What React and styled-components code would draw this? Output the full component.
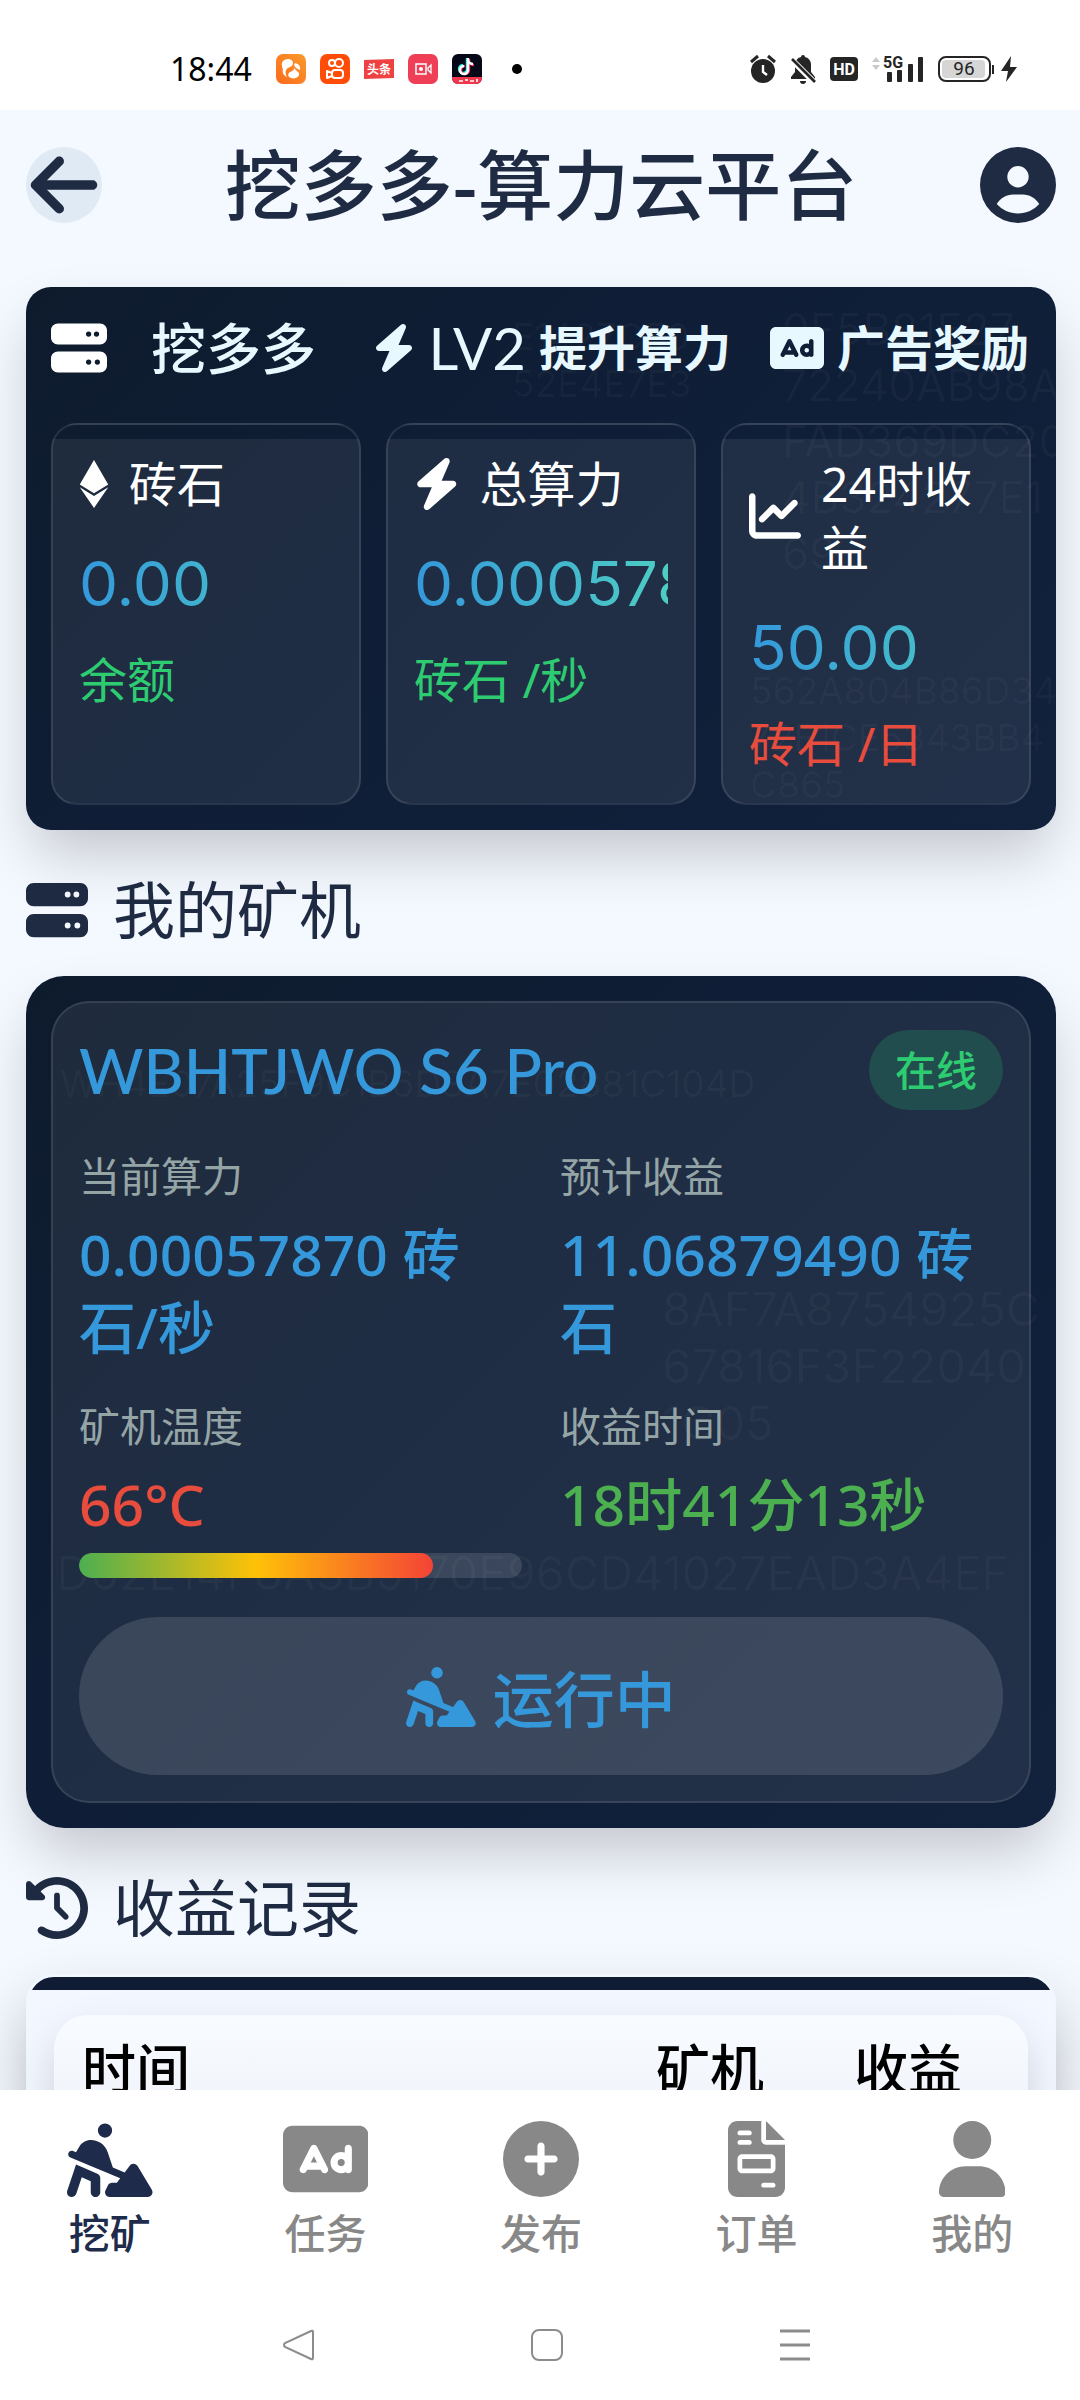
import {
  FaArrowLeft,
  FaBolt,
  FaChartLine,
  FaCirclePlus,
  FaCircleUser,
  FaClockRotateLeft,
  FaEthereum,
  FaFileInvoice,
  FaPersonDigging,
  FaRectangleAd,
  FaServer,
  FaUser,
} from "react-icons/fa6";
import styled, { createGlobalStyle } from "styled-components";

const GlobalStyle = createGlobalStyle`
  * {
    box-sizing: border-box;
  }

  body {
    margin: 0;
    background-color: #f4f8ff;
    font-family: "Noto Sans", "Noto Sans CJK SC", sans-serif;
    color: #1e2b43;
  }

  h1, h2, h3, p, dl, dd {
    margin: 0;
  }

  button {
    border: none;
    padding: 0;
    background: none;
    color: inherit;
    font: inherit;
    cursor: pointer;
  }

  svg {
    display: block;
    flex-shrink: 0;
  }
`;

const Phone = styled.div`
  height: 100vh;
  display: flex;
  flex-direction: column;
`;

// react-icons draws every icon in a square, $ratio gives it its own width back
const Glyph = styled.span`
  flex-shrink: 0;
  font-size: ${({ $size }) => $size}px;
  line-height: 1;

  svg {
    width: ${({ $ratio = 1 }) => $ratio}em;
    height: 1em;
  }
`;

const StatusBar = styled.div`
  height: 110px;
  flex-shrink: 0;
  display: flex;
  justify-content: space-between;
  align-items: center;
  padding: 28px 62px 0 170px;
  background-color: white;
`;

const StatusGroup = styled.div`
  display: flex;
  align-items: center;
  gap: 14px;
`;

const Clock = styled.span`
  margin-right: 10px;
  font-size: 32px;
  line-height: 30px;
  color: black;
`;

const Main = styled.main`
  flex: 1;
  min-height: 0;
  overflow: hidden;
  padding: 0 24px 0 26px;
`;

const Header = styled.header`
  display: flex;
  justify-content: space-between;
  align-items: center;
  padding: 37px 0 64px;
`;

const PageTitle = styled.h1`
  font-size: 76px;
  font-weight: 500;
  line-height: 76px;
`;

const BackButton = styled.button`
  width: 76px;
  height: 76px;
  display: flex;
  justify-content: center;
  align-items: center;
  border-radius: 50%;
  background-color: #e0eaf5;
`;

const Panel = styled.section`
  position: relative;
  padding: 25px;
  border-radius: ${({ $radius }) => $radius}px;
  background: linear-gradient(135deg, #0e1b2d 0%, #0f1e36 40%, #12213c 100%);
  box-shadow: 0 30px 60px -6px rgba(0, 0, 0, 0.2);
`;

const HashLayer = styled.div`
  position: absolute;
  inset: 0;
  overflow: hidden;
  border-radius: inherit;
  pointer-events: none;
`;

const Hash = styled.pre`
  position: absolute;
  left: ${({ $x }) => $x}px;
  top: ${({ $y }) => $y}px;
  margin: 0;
  font-family: Inter, sans-serif;
  font-size: ${({ $size }) => $size}px;
  line-height: ${({ $line }) => $line}px;
  color: rgba(255, 255, 255, 0.03);
`;

const PanelHeader = styled.div`
  position: relative;
  height: 72px;
  display: flex;
  justify-content: space-between;
  align-items: center;
  margin-bottom: 39px;
  padding-right: 2px;
  color: #e8f8ff;
`;

const Brand = styled.h2`
  display: flex;
  align-items: center;
  gap: 44px;
  font-family: Lato, "Noto Sans CJK SC", sans-serif;
  font-size: 55px;
  font-weight: 500;
  line-height: 72px;

  svg {
    color: white;
  }
`;

const Actions = styled.div`
  display: flex;
  gap: 39px;
`;

const ActionButton = styled.button`
  display: flex;
  align-items: center;
  gap: 13px;
  font-size: 48px;
  font-weight: 700;
  line-height: 72px;
  white-space: nowrap;
`;

const Level = styled.span`
  font-family: Lato, sans-serif;
  font-size: 58px;
  font-weight: 400;
`;

const StatGrid = styled.div`
  position: relative;
  display: grid;
  grid-template-columns: repeat(3, 1fr);
  gap: 25px;
`;

const StatCard = styled.article`
  min-width: 0;
  padding: 27px 26px;
  border: 2px solid rgba(255, 255, 255, 0.1);
  border-radius: 26px;
  background: linear-gradient(
    transparent 14px,
    rgba(255, 255, 255, 0.07) 14px
  );
`;

const StatName = styled.h3`
  display: flex;
  align-items: center;
  gap: 20px;
  font-size: 48px;
  font-weight: 400;
  line-height: 64px;
  color: white;
`;

const StatValue = styled.p`
  margin: 26px 0 22px;
  overflow: hidden;
  font-family: Inter, sans-serif;
  font-size: 62px;
  line-height: 84px;
  color: transparent;
  background: linear-gradient(90deg, #3498db, #4ecdc4);
  background-clip: text;
`;

const StatUnit = styled.p`
  font-size: 48px;
  line-height: 64px;
  color: ${({ $color }) => $color};
`;

const SectionTitle = styled.h2`
  display: flex;
  align-items: center;
  gap: 25px;
  margin: 40px 0 26px;
  font-size: 62px;
  font-weight: 400;
  line-height: 80px;
`;

const MinerCard = styled.article`
  position: relative;
  padding: 26px;
  border: 2px solid rgba(255, 255, 255, 0.1);
  border-radius: 38px;
  background-color: rgba(255, 255, 255, 0.07);
`;

const MinerHead = styled.div`
  display: flex;
  justify-content: space-between;
  align-items: center;
  margin-bottom: 37px;
`;

const MinerName = styled.h3`
  font-family: Lato, sans-serif;
  font-size: 62px;
  font-weight: 500;
  line-height: 82px;
  color: #3498db;
`;

const Badge = styled.span`
  padding: 0 26px;
  border-radius: 40px;
  font-size: 41px;
  font-weight: 500;
  line-height: 80px;
  color: #2ecc71;
  background-color: rgba(46, 204, 113, 0.2);
`;

const Details = styled.dl`
  display: grid;
  grid-template-columns: 1fr 1fr;
  gap: 34px 38px;
`;

const Label = styled.dt`
  margin-bottom: 14px;
  font-size: 41px;
  line-height: 56px;
  color: #95a5a6;
`;

const Value = styled.dd`
  font-size: 57px;
  font-weight: 500;
  line-height: 73px;
  color: ${({ $color }) => $color};
`;

const Track = styled.div`
  height: 25px;
  margin-top: 12px;
  overflow: hidden;
  border-radius: 13px;
  background-color: rgba(255, 255, 255, 0.12);
`;

const TrackFill = styled.div`
  height: 100%;
  border-radius: 13px;
  background: linear-gradient(90deg, #4caf50, #ffc107, #f44336);
`;

const RunButton = styled.button`
  width: 100%;
  height: 158px;
  display: flex;
  justify-content: center;
  align-items: center;
  gap: 17px;
  margin-top: 39px;
  border-radius: 79px;
  background-color: rgba(255, 255, 255, 0.12);
  font-size: 61px;
  font-weight: 500;
  color: #3498db;
`;

const RecordPanel = styled.section`
  padding: 38px 25px 25px;
  border: 3px solid #f1f7ff;
  border-radius: 28px;
  background: linear-gradient(#0f1c33 13px, #f3f7ff 13px);
  box-shadow: 0 30px 60px rgba(0, 0, 0, 0.24);
`;

const RecordCard = styled.div`
  padding: 20px 28px 200px;
  border-radius: 34px;
  background: linear-gradient(#f8fbff, #f1f4fa 90px);
  box-shadow: 0 20px 44px rgba(0, 0, 0, 0.16);
`;

const RecordTable = styled.table`
  width: 100%;
  border-collapse: collapse;
  table-layout: fixed;
`;

const Th = styled.th`
  width: ${({ $width }) => $width};
  padding: 0;
  font-size: 54px;
  font-weight: 500;
  line-height: 68px;
  text-align: left;
  color: black;
`;

const TabBar = styled.nav`
  position: relative;
  height: 200px;
  flex-shrink: 0;
  display: grid;
  grid-template-columns: repeat(5, 1fr);
  padding: 31px 0 0 2px;
  background-color: white;
`;

const Tab = styled.a`
  display: flex;
  flex-direction: column;
  align-items: center;
  gap: 8px;
  font-size: 41px;
  font-weight: 500;
  line-height: 56px;
  text-decoration: none;
  color: ${({ $active }) => ($active ? "#1e2b4a" : "#888888")};
`;

const SystemBar = styled.div`
  height: 110px;
  flex-shrink: 0;
  display: grid;
  grid-template-columns: repeat(3, 248px);
  justify-content: center;
  justify-items: center;
  padding-left: 13px;
  background-color: white;

  button {
    height: 110px;
    padding: 0 40px;
  }
`;

const stats = [
  { name: "砖石", Icon: FaEthereum, size: 48, ratio: 0.625, value: "0.00", unit: "余额", color: "#2ecc71" },
  { name: "总算力", Icon: FaBolt, size: 52, ratio: 0.875, value: "0.00057870", unit: "砖石 /秒", color: "#2ecc71" },
  { name: "24时收益", Icon: FaChartLine, size: 52, ratio: 1, value: "50.00", unit: "砖石 /日", color: "#e74c3c" },
];

const tabs = [
  { name: "挖矿", Icon: FaPersonDigging, ratio: 1.125 },
  { name: "任务", Icon: FaRectangleAd, ratio: 1.125 },
  { name: "发布", Icon: FaCirclePlus, ratio: 1 },
  { name: "订单", Icon: FaFileInvoice, ratio: 0.75 },
  { name: "我的", Icon: FaUser, ratio: 0.875 },
];

function AppIcons() {
  return (
    <>
      <svg width="30" height="30" viewBox="0 0 30 30">
        <defs>
          <linearGradient id="uc" x1="1" y1="0" x2="0" y2="1">
            <stop offset="0" stopColor="#fb9a2c" />
            <stop offset="1" stopColor="#fb6a1c" />
          </linearGradient>
        </defs>
        <rect width="30" height="30" rx="7" fill="url(#uc)" />
        <path
          d="M6 12c-1-4 2-7 6-7 3 0 5 2 5 4 0 3-3 4-5 5-3 2-3 5-1 9-4-2-5-5-4-8-1-1-1-2-1-3z"
          fill="white"
        />
        <path d="M19 9c4 1 6 4 5 7-2-1-5-2-6-5z" fill="white" />
        <path d="M18 14c2 3 6 4 5 7s-5 4-8 3-4-4-1-6c2-1 4-1 4-4z" fill="white" />
      </svg>
      <svg width="30" height="30" viewBox="0 0 30 30">
        <rect width="30" height="30" rx="7" fill="#ff4d08" />
        <g fill="none" stroke="white" strokeWidth="2">
          <circle cx="12" cy="9" r="3" />
          <circle cx="19" cy="9" r="4" />
          <rect x="12" y="16" width="11" height="8" rx="3" />
          <path d="M12 19l-5-2v7l5-2" strokeLinejoin="round" />
        </g>
      </svg>
      <svg width="30" height="30" viewBox="0 0 30 30">
        <path d="M0 6l30-1v19L0 25z" fill="#f04142" />
        <text
          x="15"
          y="20"
          textAnchor="middle"
          fontFamily="Noto Sans CJK SC, sans-serif"
          fontSize="12"
          fontWeight="700"
          fill="white"
        >
          头条
        </text>
      </svg>
      <svg width="30" height="30" viewBox="0 0 30 30">
        <rect width="30" height="30" rx="7" fill="#ee3f56" />
        <rect x="8" y="10" width="10" height="10" fill="none" stroke="white" strokeWidth="1.5" />
        <circle cx="13" cy="15" r="2" fill="white" />
        <path d="M20 14l3-3v8l-3-3z" fill="none" stroke="white" strokeWidth="1.3" />
      </svg>
      <svg width="30" height="30" viewBox="0 0 30 30">
        <rect width="30" height="30" rx="6" fill="#050816" />
        <g fill="none" strokeWidth="2.4">
          <path d="M15 4v11a4 4 0 1 1-4-4M15 5c0 3 2 5 5 5" stroke="#25f4ee" />
          <path d="M17 5v11a4 4 0 1 1-4-4M17 6c0 3 2 5 5 5" stroke="#fe2c55" />
          <path d="M16 4v12a4 4 0 1 1-4-4M16 5c0 3 2 5 5 5" stroke="white" />
        </g>
        <path d="M0 23h30v1a6 6 0 0 1-6 6H6a6 6 0 0 1-6-6z" fill="#f2384e" />
        <path d="M7 27h4m2-1h3m2 1h4m3-2v3" stroke="white" strokeWidth="1.6" />
      </svg>
      <svg width="38" height="30" viewBox="0 0 38 30">
        <circle cx="21" cy="15" r="5" fill="black" />
      </svg>
    </>
  );
}

function SystemIcons() {
  return (
    <>
      <svg width="26" height="30" viewBox="0 0 26 30" fill="#252525">
        <circle cx="13" cy="17" r="12" />
        <path d="M1 8l7-6M18 2l7 6" stroke="#252525" strokeWidth="3" />
        <path d="M13 11v7l4 3" fill="none" stroke="white" strokeWidth="2.4" />
      </svg>
      <svg width="26" height="30" viewBox="0 0 26 30">
        <path
          d="M13 1a2 2 0 0 1 2 2c4 1 6 4 6 8v7l4 5v2H1v-2l4-5v-7c0-4 2-7 6-8a2 2 0 0 1 2-2zM10 27h6a3 3 0 0 1-6 0z"
          fill="#252525"
        />
        <path d="M0 4l25 25" stroke="white" strokeWidth="6" />
        <path d="M2 5l23 23" stroke="#252525" strokeWidth="2.6" />
      </svg>
      <svg width="28" height="30" viewBox="0 0 28 30">
        <rect y="3" width="28" height="24" rx="4" fill="#252525" />
        <text
          x="14"
          y="21"
          textAnchor="middle"
          fontFamily="Roboto, sans-serif"
          fontSize="16"
          fontWeight="700"
          fill="white"
        >
          HD
        </text>
      </svg>
      <svg width="52" height="30" viewBox="0 0 52 30" fill="#252525">
        <path d="M0 8l4-5 4 5zM0 11l4 5 4-5z" fill="#c9c9c9" />
        <text x="11" y="14" fontFamily="Roboto, sans-serif" fontSize="16" fontWeight="700">
          5G
        </text>
        <rect x="15" y="18" width="5" height="10" rx="1" />
        <rect x="25" y="16" width="5" height="12" rx="1" />
        <rect x="36" y="10" width="5" height="18" rx="1" />
        <rect x="46" y="3" width="5" height="25" rx="1" />
      </svg>
      <svg width="80" height="30" viewBox="0 0 80 30" fill="#252525">
        <rect x="1" y="3" width="51" height="24" rx="7" fill="white" stroke="#252525" strokeWidth="2" />
        <rect x="4" y="6" width="43" height="18" rx="4" fill="#d6d6d6" />
        <rect x="54" y="11" width="2" height="9" />
        <text x="26" y="21" textAnchor="middle" fontFamily="Roboto, sans-serif" fontSize="19">
          96
        </text>
        <path d="M73 2L63 17h7l-2 11 11-15h-7z" />
      </svg>
    </>
  );
}

function App() {
  return (
    <Phone>
      <GlobalStyle />
      <StatusBar>
        <StatusGroup>
          <Clock>18:44</Clock>
          <AppIcons />
        </StatusGroup>
        <StatusGroup>
          <SystemIcons />
        </StatusGroup>
      </StatusBar>

      <Main>
        <Header>
          <BackButton aria-label="返回">
            <FaArrowLeft size={76} />
          </BackButton>
          <PageTitle>挖多多-算力云平台</PageTitle>
          <button aria-label="个人中心">
            <FaCircleUser size={76} />
          </button>
        </Header>

        <Panel $radius={25}>
          <HashLayer aria-hidden="true">
            <Hash $x={486} $y={26} $size={37} $line={47}>
              {"E1427C50\n52E4E7E3"}
            </Hash>
            <Hash $x={756} $y={14} $size={44} $line={56}>
              {"0F5B81E27\n72240AB98A\nFAD369DC20\n4B324277E1\n69"}
            </Hash>
            <Hash $x={724} $y={380} $size={37} $line={47}>
              {"562A804B86D34\n72E1CE5343BB4\nC865"}
            </Hash>
          </HashLayer>
          <PanelHeader>
            <Brand>
              <FaServer size={56} />
              挖多多
            </Brand>
            <Actions>
              <ActionButton>
                <Glyph $size={48} $ratio={0.875}>
                  <FaBolt />
                </Glyph>
                <Level>LV2</Level>
                提升算力
              </ActionButton>
              <ActionButton>
                <Glyph $size={48} $ratio={1.125}>
                  <FaRectangleAd />
                </Glyph>
                广告奖励
              </ActionButton>
            </Actions>
          </PanelHeader>
          <StatGrid>
            {stats.map(({ name, Icon, size, ratio, value, unit, color }) => (
              <StatCard key={name}>
                <StatName>
                  <Glyph $size={size} $ratio={ratio}>
                    <Icon />
                  </Glyph>
                  {name}
                </StatName>
                <StatValue>{value}</StatValue>
                <StatUnit $color={color}>{unit}</StatUnit>
              </StatCard>
            ))}
          </StatGrid>
        </Panel>

        <SectionTitle>
          <FaServer size={62} />
          我的矿机
        </SectionTitle>

        <Panel $radius={38}>
          <HashLayer aria-hidden="true">
            <Hash $x={34} $y={84} $size={37} $line={47}>
              {"WH4E07A25F9C1B6D3A7E02881C104D"}
            </Hash>
            <Hash $x={636} $y={304} $size={47} $line={57}>
              {"8AF7A8754925C\n67816F3F22040\n1C05"}
            </Hash>
            <Hash $x={30} $y={567} $size={47} $line={60}>
              {"D02E14F8A3B5170E96CD41027EAD3A4EF"}
            </Hash>
          </HashLayer>
          <MinerCard>
            <MinerHead>
              <MinerName>WBHTJWO S6 Pro</MinerName>
              <Badge>在线</Badge>
            </MinerHead>
            <Details>
              <div>
                <Label>当前算力</Label>
                <Value $color="#3498db">0.00057870 砖石/秒</Value>
              </div>
              <div>
                <Label>预计收益</Label>
                <Value $color="#3498db">11.06879490 砖石</Value>
              </div>
              <div>
                <Label>矿机温度</Label>
                <Value $color="#e74c3c">66°C</Value>
                <Track>
                  <TrackFill style={{ width: "80%" }} />
                </Track>
              </div>
              <div>
                <Label>收益时间</Label>
                <Value $color="#4caf50">18时41分13秒</Value>
              </div>
            </Details>
            <RunButton>
              <Glyph $size={62} $ratio={1.125}>
                <FaPersonDigging />
              </Glyph>
              运行中
            </RunButton>
          </MinerCard>
        </Panel>

        <SectionTitle>
          <FaClockRotateLeft size={62} />
          收益记录
        </SectionTitle>

        <RecordPanel>
          <RecordCard>
            <RecordTable>
              <thead>
                <tr>
                  <Th>时间</Th>
                  <Th $width="198px">矿机</Th>
                  <Th $width="146px">收益</Th>
                </tr>
              </thead>
            </RecordTable>
          </RecordCard>
        </RecordPanel>
      </Main>

      <TabBar>
        {tabs.map(({ name, Icon, ratio }, index) => (
          <Tab key={name} href="#" $active={index === 0}>
            <Glyph $size={76} $ratio={ratio}>
              <Icon />
            </Glyph>
            {name}
          </Tab>
        ))}
      </TabBar>

      <SystemBar>
        <button aria-label="后退">
          <svg width="32" height="32" viewBox="0 0 32 32" fill="none" stroke="#8c8c8c" strokeWidth="2">
            <path d="M28 2L2 14q-2 2 0 4l26 12q2 1 2-1V3q0-2-2-1z" />
          </svg>
        </button>
        <button aria-label="主屏幕">
          <svg width="32" height="32" viewBox="0 0 32 32" fill="none" stroke="#8c8c8c" strokeWidth="2">
            <rect x="1" y="1" width="30" height="30" rx="7" />
          </svg>
        </button>
        <button aria-label="菜单">
          <svg width="32" height="32" viewBox="0 0 32 32" stroke="#8c8c8c" strokeWidth="3">
            <path d="M1 2h30M1 16h30M1 30h30" />
          </svg>
        </button>
      </SystemBar>
    </Phone>
  );
}

export default App;
